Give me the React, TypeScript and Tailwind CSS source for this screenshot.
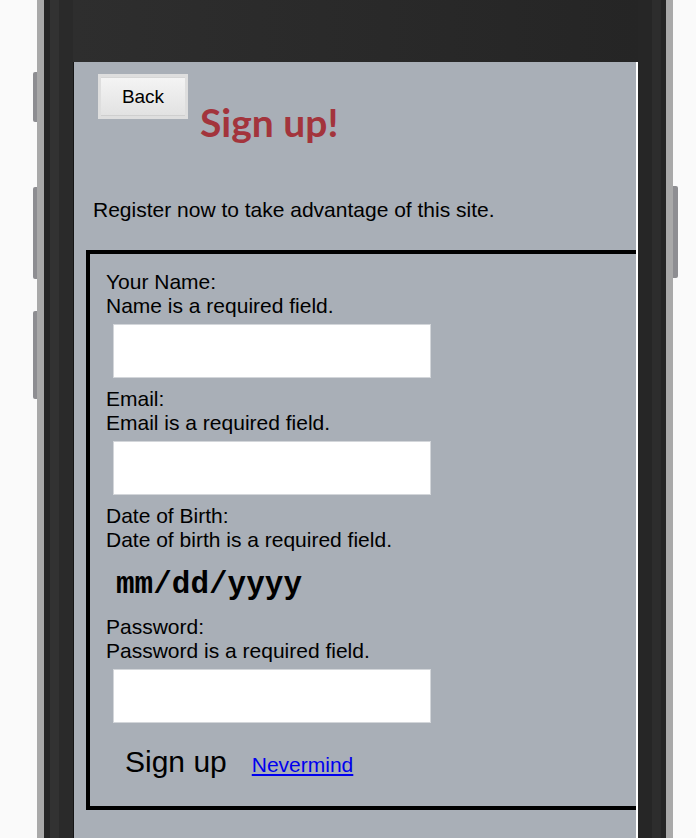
import React from "react";

function Field({ label, hint }: { label: string; hint: string }) {
  return (
    <div>
      <div>{label}</div>
      <div>{hint}</div>
      <input
        type="text"
        readOnly
        className="ml-[7px] mt-[6px] mb-[9px] block h-[54px] w-[318px] border border-[#d3d6da] bg-white outline-none"
      />
    </div>
  );
}

export default function App() {
  return (
    <div
      className="flex h-[838px] w-[696px] overflow-hidden bg-[#fafafa] text-black"
      style={{ fontFamily: '"Liberation Sans", Arial, sans-serif' }}
    >
      {/* left side buttons */}
      <div className="flex w-[37px] shrink-0 flex-col items-end">
        <div className="mt-[72px] h-[50px] w-[4px] rounded-l-[2px] bg-[#8e8e92]" />
        <div className="mt-[65px] h-[92px] w-[4px] rounded-l-[2px] bg-[#8e8e92]" />
        <div className="mt-[32px] h-[88px] w-[4px] rounded-l-[2px] bg-[#8e8e92]" />
      </div>

      {/* phone body */}
      <div className="flex shrink-0 bg-[#a9a9a9] px-[7px]">
        <div className="flex w-[622px]">
          <div className="w-[6px] bg-[#262626]" />
          <div className="w-[9px] bg-[#323232]" />
          <div className="w-[14px] bg-[#2a2a2a]" />
          <div className="flex w-[565px] flex-col">
            <div className="h-[62px] bg-gradient-to-r from-[#2e2e2e] to-[#252525]" />
            <div className="flex-1 overflow-hidden border-l border-r-2 border-l-[#151515] border-r-white bg-[#a9afb7]">
              <div className="flex items-start">
                <button className="ml-[24px] mt-[12px] h-[45px] w-[90px] border-[3px] border-[#dedede] bg-[#e8e8e8] p-0">
                  <div className="flex h-full w-full items-center justify-center border-y border-t-[#d6d6d6] border-b-[#cfcfcf] bg-gradient-to-b from-[#f4f4f4] to-[#e2e2e2] pt-[2px] text-[19px]">
                    Back
                  </div>
                </button>
                <h1
                  className="ml-[12px] mt-[36px] text-[39px] font-bold leading-[48px] text-[#a3343c]"
                  style={{ fontFamily: 'Lato, "Noto Sans", sans-serif' }}
                >
                  Sign up!
                </h1>
              </div>

              <p className="ml-[19px] mt-[52px] text-[21px] leading-[24px]">
                Register now to take advantage of this site.
              </p>

              <div className="ml-[12px] mt-[28px] w-[600px] border-4 border-black pb-[27px] pl-[16px] pt-[16px] text-[21px] leading-[24px]">
                <Field label="Your Name:" hint="Name is a required field." />
                <Field label="Email:" hint="Email is a required field." />
                <div>
                  <div>Date of Birth:</div>
                  <div>Date of birth is a required field.</div>
                  <div
                    className="mb-[13px] ml-[10px] mt-[15px] text-[31px] font-bold leading-[35px]"
                    style={{ fontFamily: '"Liberation Mono", "Courier New", monospace' }}
                  >
                    mm/dd/yyyy
                  </div>
                </div>
                <div>
                  <div>Password:</div>
                  <div>Password is a required field.</div>
                  <input
                    type="password"
                    readOnly
                    className="ml-[7px] mt-[6px] block h-[54px] w-[318px] border border-[#d3d6da] bg-white outline-none"
                  />
                </div>
                <div className="mt-[22px] flex items-baseline">
                  <button className="ml-[19px] p-0 text-[30px] leading-[34px]">Sign up</button>
                  <a href="#" className="ml-[25px] text-[21px] leading-[24px] text-[#0000ee] underline">
                    Nevermind
                  </a>
                </div>
              </div>
            </div>
          </div>
          <div className="w-[14px] bg-[#262626]" />
          <div className="w-[9px] bg-[#2d2d2d]" />
          <div className="w-[5px] bg-[#262626]" />
        </div>
      </div>

      {/* right side button */}
      <div className="flex shrink-0 flex-col">
        <div className="mt-[186px] h-[92px] w-[5px] rounded-r-[2px] bg-[#8e8e92]" />
      </div>
    </div>
  );
}
